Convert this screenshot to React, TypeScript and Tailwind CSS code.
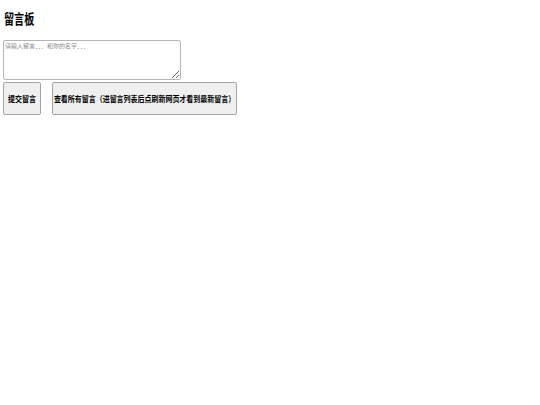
export default function App() {
  return (
    <div
      className="min-h-[405px] bg-white px-[3px] pt-[11px] text-black"
      style={{ fontFamily: '"Noto Sans CJK SC", "Liberation Sans", sans-serif' }}
    >
      <h1 className="ml-[1px] h-[14px] origin-left scale-x-[0.72] text-[14px] font-bold leading-[14px]">
        留言板
      </h1>

      <textarea
        placeholder="请输入留言．．．和你的名字．．．"
        className="mt-[15px] block h-[40px] w-[178px] rounded-[2px] border border-[#b5b5b5] bg-white px-[1px] py-[1px] text-[6px] leading-[7px] placeholder:text-[#8a8a8a]"
      />

      <div className="mt-[2px] flex gap-[11px]">
        <button className="flex h-[33px] w-[38px] items-center justify-center rounded-[2px] border border-[#a5a5a5] bg-[#efefef] font-bold">
          <span className="inline-block scale-x-[0.82] whitespace-nowrap text-[8.5px]">提交留言</span>
        </button>
        <button className="flex h-[33px] w-[185px] items-center justify-center rounded-[2px] border border-[#a5a5a5] bg-[#efefef] font-bold">
          <span className="inline-block scale-x-[0.82] whitespace-nowrap text-[8.5px]">
            查看所有留言（进留言列表后点刷新网页才看到最新留言）
          </span>
        </button>
      </div>
    </div>
  );
}
